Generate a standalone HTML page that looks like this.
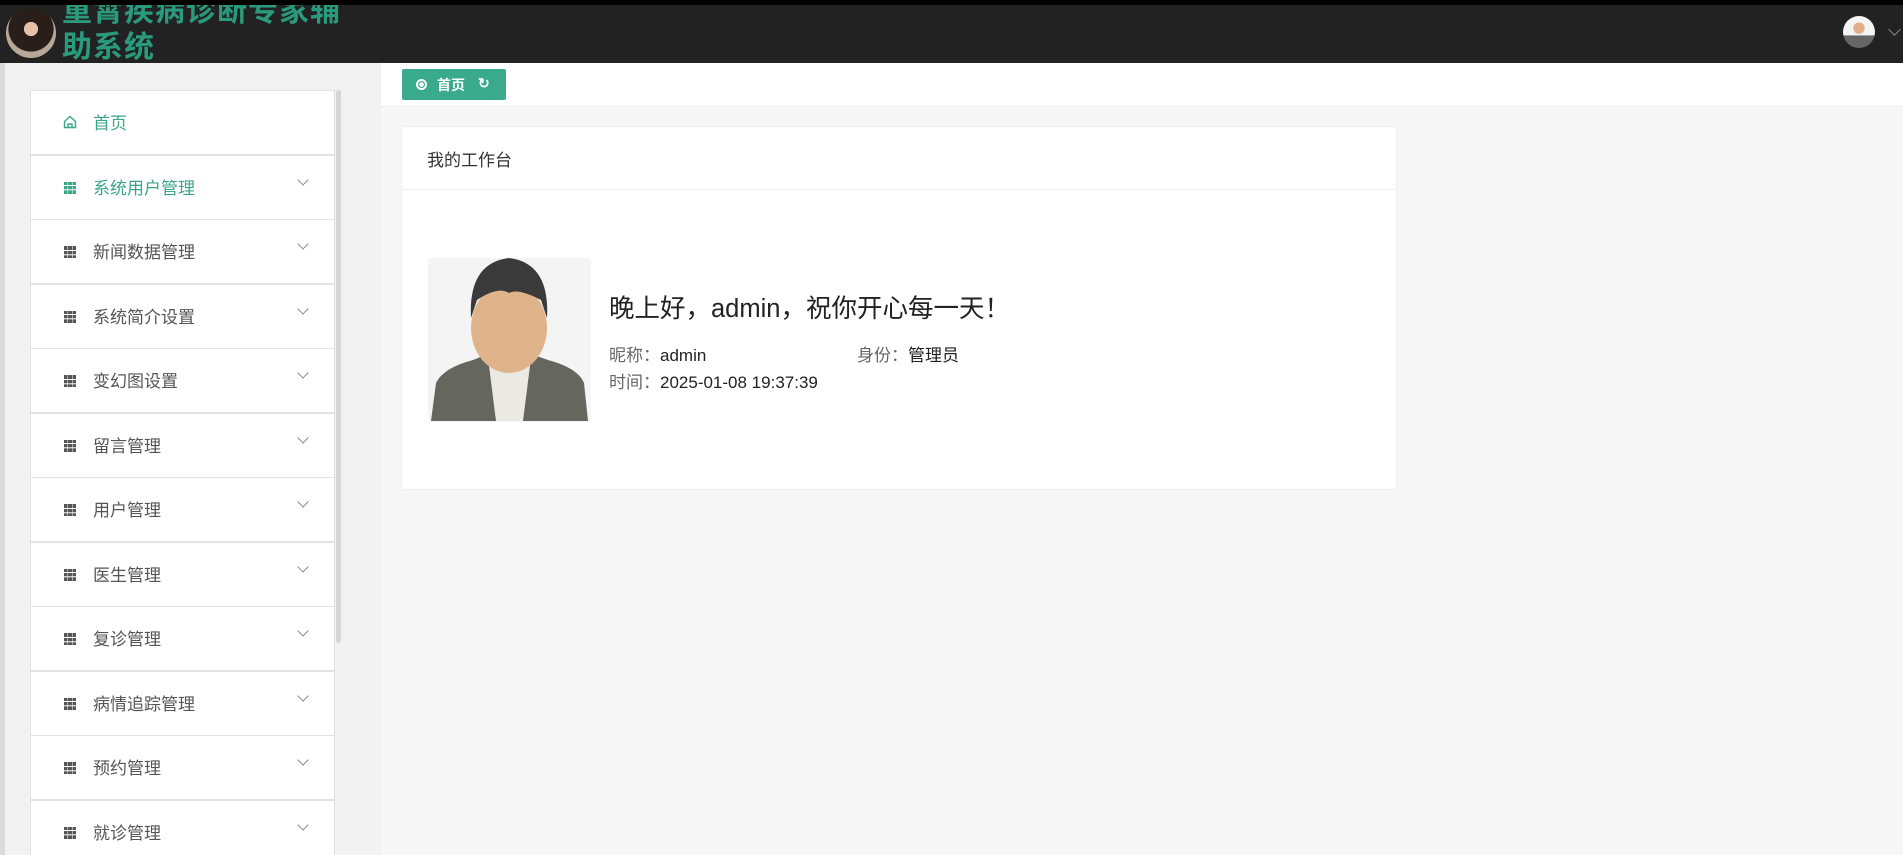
<!DOCTYPE html>
<html><head><meta charset="utf-8"><style>
*{margin:0;padding:0;box-sizing:border-box}
html,body{width:1903px;height:855px;overflow:hidden}
body{background:#f7f7f7;font-family:"Liberation Sans","Noto Sans CJK SC",sans-serif;position:relative}
.hdr{position:absolute;left:0;top:0;width:1903px;height:63px;background:#222;border-top:5px solid #000;overflow:hidden}
.logo{position:absolute;left:6px;top:3px;width:50px;height:50px;border-radius:50%;background:radial-gradient(circle at 50% 42%,#e8c0a8 0 18%,#2a1e1a 19% 58%,#b8a898 60%)}
.title{position:absolute;left:62px;top:-11px;width:300px;font-size:30px;line-height:36px;font-weight:bold;color:#2a9a7c;letter-spacing:1px}
.side{position:absolute;left:0;top:63px;width:381px;height:792px;background:#f2f2f2;border-left:5px solid #dcdcdc}
.menu{position:absolute;left:30px;top:90px;width:305px;height:765px;overflow:hidden}
.item{position:absolute;left:0;width:305px;height:65px;background:#fff;border:1px solid #e2e2e2;font-size:17px;color:#555}
.item .ic{position:absolute;left:33px;top:26px;width:12px;height:12px;background:
linear-gradient(90deg,#555 0 3.5px,transparent 3.5px 4.2px,#555 4.2px 7.8px,transparent 7.8px 8.5px,#555 8.5px);}
.item .ic:after{content:"";position:absolute;left:0;top:3.5px;width:12px;height:0.8px;background:#fff;box-shadow:0 4.3px 0 #fff}
.item .tx{position:absolute;left:62px;top:18px}
.item .cv{position:absolute;left:268px;top:20px;width:8px;height:8px;border-right:1px solid #888;border-bottom:1px solid #888;transform:rotate(45deg)}
.item.g{color:#3aa58a}.item.g .ic{background:linear-gradient(90deg,#3aa58a 0 3.5px,transparent 3.5px 4.2px,#3aa58a 4.2px 7.8px,transparent 7.8px 8.5px,#3aa58a 8.5px)}
.sb{position:absolute;left:336px;top:90px;width:5px;height:553px;background:#d6d6d6;border-radius:3px}
.tabs{position:absolute;left:381px;top:63px;width:1522px;height:44px;background:#fff;border-bottom:1px solid #eee}
.btn{position:absolute;left:402px;top:69px;width:104px;height:31px;background:#3aaa8c;border-radius:2px;color:#fff;font-size:14px;font-weight:bold}
.card{position:absolute;left:401px;top:126px;width:996px;height:364px;background:#fff;border:1px solid #eee;border-radius:3px}
.ch{height:63px;border-bottom:1px solid #eee;font-size:17px;color:#333;padding:19px 0 0 25px}
.av{position:absolute;left:26px;top:131px;width:163px;height:164px;background:#f4f4f4;border-radius:4px;overflow:hidden}
.g1{position:absolute;left:207px;top:161px;font-size:25.5px;color:#222}
.inf{position:absolute;font-size:17px;color:#222}
.inf span{color:#666}
</style></head><body>
<div class="hdr"><div class="logo"></div><div class="title">重霄疾病诊断专家辅助系统</div>
<div style="position:absolute;left:1843px;top:11px;width:32px;height:32px;border-radius:50%;background:radial-gradient(circle at 50% 38%,#e0b08a 0 22%,transparent 23%),linear-gradient(#f4f4f4 60%,#666 61%)"></div>
<div style="position:absolute;left:1890px;top:20px;width:9px;height:9px;border-right:1px solid #888;border-bottom:1px solid #888;transform:rotate(45deg)"></div>
</div>
<div class="side"></div>
<div class="menu">
<div class="item g" style="top:0"><svg style="position:absolute;left:32px;top:24px" width="14" height="14" viewBox="0 0 14 14" fill="none" stroke="#3aa58a" stroke-width="1.4"><path d="M1.5 6.5L7 1.5l5.5 5V12.5h-11z M5 12.5V9h4v3.5"/></svg><span class="tx">首页</span></div>
<div class="item g" style="top:64.5px"><i class="ic"></i><span class="tx">系统用户管理</span><i class="cv"></i></div>
<div class="item" style="top:129px"><i class="ic"></i><span class="tx">新闻数据管理</span><i class="cv"></i></div>
<div class="item" style="top:193.5px"><i class="ic"></i><span class="tx">系统简介设置</span><i class="cv"></i></div>
<div class="item" style="top:258px"><i class="ic"></i><span class="tx">变幻图设置</span><i class="cv"></i></div>
<div class="item" style="top:322.5px"><i class="ic"></i><span class="tx">留言管理</span><i class="cv"></i></div>
<div class="item" style="top:387px"><i class="ic"></i><span class="tx">用户管理</span><i class="cv"></i></div>
<div class="item" style="top:451.5px"><i class="ic"></i><span class="tx">医生管理</span><i class="cv"></i></div>
<div class="item" style="top:516px"><i class="ic"></i><span class="tx">复诊管理</span><i class="cv"></i></div>
<div class="item" style="top:580.5px"><i class="ic"></i><span class="tx">病情追踪管理</span><i class="cv"></i></div>
<div class="item" style="top:645px"><i class="ic"></i><span class="tx">预约管理</span><i class="cv"></i></div>
<div class="item" style="top:709.5px;height:80px"><i class="ic"></i><span class="tx">就诊管理</span><i class="cv"></i></div>
</div>
<div class="sb"></div>
<div class="tabs"></div>
<div class="btn"><span style="position:absolute;left:14px;top:10px;width:11px;height:11px;border-radius:50%;border:2px solid #fff;background:radial-gradient(#fff 0 45%,#3aaa8c 50%)"></span><span style="position:absolute;left:35px;top:6px">首页</span><span style="position:absolute;left:76px;top:6px;font-size:14px">↻</span></div>
<div class="card">
<div class="ch">我的工作台</div>
<div class="av"><svg width="163" height="164" viewBox="0 0 163 164">
<path d="M3 163 L8 125 Q15 110 45 102 L60 96 L103 96 L120 102 Q150 110 156 125 L160 163 Z" fill="#65665e"/>
<path d="M60 100 L103 100 L95 163 L68 163 Z" fill="#ebe9e4"/>
<path d="M58 98 Q81 110 105 98 L103 107 Q81 116 60 107Z" fill="#2a2a2a"/>
<ellipse cx="81" cy="70" rx="38" ry="45" fill="#dfb48a"/>
<path d="M43 60 Q40 5 81 0 Q122 5 119 60 L113 42 Q90 30 81 35 Q70 28 49 42 Z" fill="#3a3a3a"/>
</svg></div>
<div class="g1">晚上好，admin，祝你开心每一天！</div>
<div class="inf" style="left:207px;top:214px"><span>昵称：</span>admin</div>
<div class="inf" style="left:455px;top:214px"><span>身份：</span>管理员</div>
<div class="inf" style="left:207px;top:241px"><span>时间：</span>2025-01-08 19:37:39</div>
</div>
</body></html>
